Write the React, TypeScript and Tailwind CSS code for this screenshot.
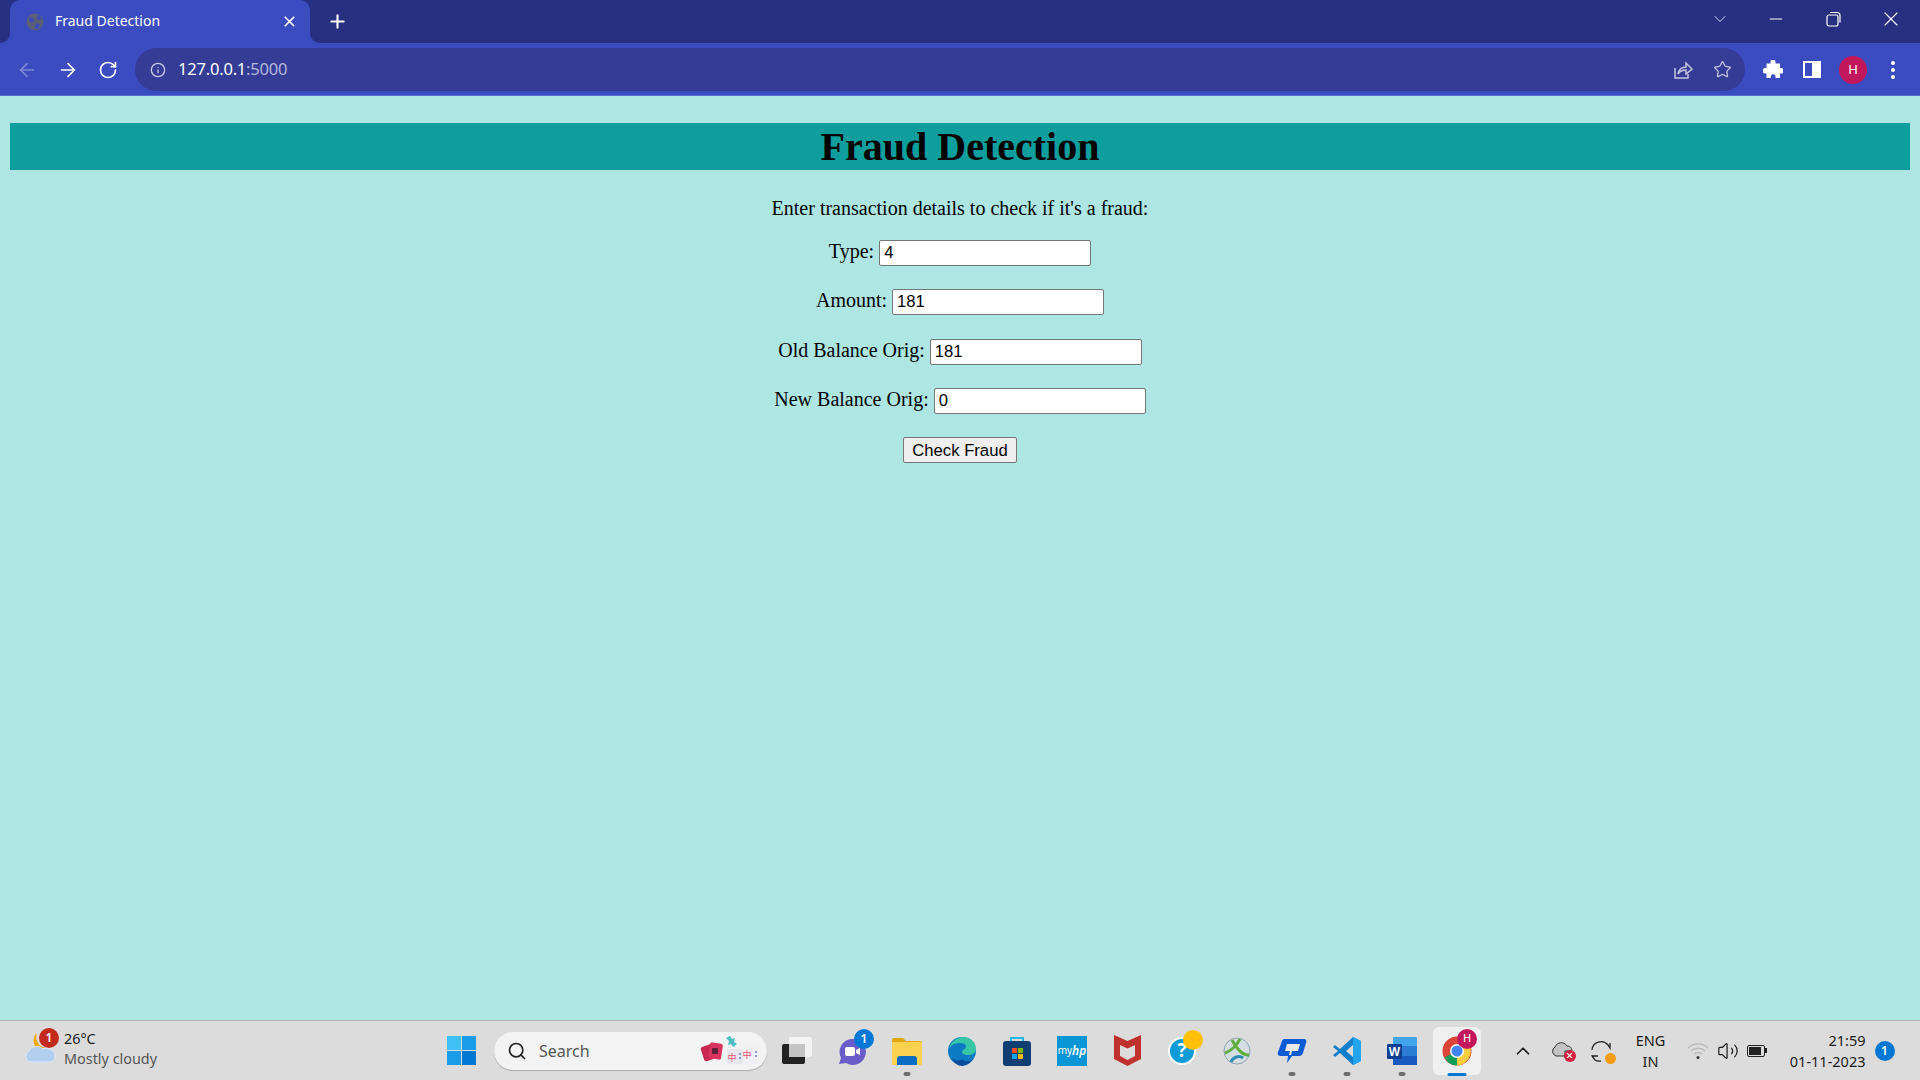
import React from 'react'
import { ArrowLeft, ArrowRight, RotateCw, Info, Star, X, Plus, ChevronDown, ChevronUp, Minus, Search, Volume2 } from 'lucide-react'

const uiFont = "font-['Noto_Sans',sans-serif]"

function Globe() {
  return (
    <svg width="18" height="18" viewBox="0 0 18 18">
      <circle cx="9" cy="9" r="8.5" fill="#5a5f75" />
      <path d="M3 5c2-1 4 0 5 1s0 2-1 3-3 0-4-1zM11 2c2 0 4 2 5 4l-3 1-2-2zM9 11c2-1 4 0 5 1l-2 4c-1 0-2 0-3-1z" fill="#3d4bb8" />
    </svg>
  )
}

function Tab() {
  return (
    <div className="relative flex h-[43px] w-[300px] items-center rounded-t-[10px] bg-[#3b4bc0] pl-[16px] pr-[12px]">
      <div className="absolute bottom-0 left-[-10px] h-[10px] w-[10px] bg-[#3b4bc0]">
        <div className="h-full w-full rounded-br-[10px] bg-[#262f80]" />
      </div>
      <div className="absolute bottom-0 right-[-10px] h-[10px] w-[10px] bg-[#3b4bc0]">
        <div className="h-full w-full rounded-bl-[10px] bg-[#262f80]" />
      </div>
      <Globe />
      <span className={`mb-[2px] ml-[11px] flex-1 text-[14px] text-white ${uiFont}`}>Fraud Detection</span>
      <X size={17} strokeWidth={2.4} className="text-white" />
    </div>
  )
}

function TabStrip() {
  return (
    <div className="flex h-[43px] items-center bg-[#262f80] pl-[10px] text-white">
      <Tab />
      <Plus size={21} strokeWidth={2.4} className="ml-[17px]" />
      <div className="flex-1" />
      <ChevronDown size={20} strokeWidth={1.2} className="mb-[6px] text-[#d5d8ef]" />
      <div className="w-[46px]" />
      <Minus size={20} strokeWidth={1.2} className="mb-[6px] ml-[-10px]" />
      <div className="mb-[6px] ml-[37px] h-[20px] w-[20px]">
        <svg width="20" height="20" viewBox="0 0 20 20" fill="none" stroke="#fff" strokeWidth="1.2">
          <rect x="4" y="6" width="11" height="11" rx="2" />
          <path d="M7 3.500h7a3 3 0 0 1 3 3v7" />
        </svg>
      </div>
      <X size={24} strokeWidth={1.1} className="mb-[6px] ml-[36px] mr-[17px]" />
    </div>
  )
}

function Toolbar() {
  return (
    <div className="flex h-[53px] items-center border-b border-[#5b6ad2] bg-[#3b4bc0] pt-[1px] text-white">
      <div className="flex w-[135px] items-center pl-[16px]">
        <ArrowLeft size={22} strokeWidth={1.8} className="text-[#7c88d6]" />
        <ArrowRight size={22} strokeWidth={1.8} className="ml-[19px]" />
        <RotateCw size={20} strokeWidth={2} className="ml-[19px]" />
      </div>
      <div className="flex h-[43px] flex-1 items-center rounded-full bg-[#343c96] pl-[15px] pr-[13px]">
        <Info size={16} strokeWidth={2} className="text-[#c9cbe4]" />
        <span className={`ml-[12px] flex-1 text-[16.500px] tracking-[-0.2px] ${uiFont}`}>
          127.0.0.1<span className="text-[#b4b8dc]">:5000</span>
        </span>
        <svg width="20" height="20" viewBox="0 0 20 20" fill="none" stroke="#c3c5de" strokeWidth="1.5">
          <path d="M2 8v10h13v-4" />
          <path d="M5 14c1-5 4-7 8-7V3l6 6-6 5v-4c-3 0-6 1-8 4z" />
        </svg>
        <Star size={19} strokeWidth={1.6} className="ml-[20px] text-[#c3c5de]" />
      </div>
      <div className="flex w-[175px] items-center pl-[18px]">
        <svg width="20" height="20" viewBox="0 0 20 20" fill="#fff">
          <path d="M7.500 2a2.500 2.500 0 0 1 5 0v1.500H17V8h1a2.800 2.800 0 0 1 0 5.600h-1V18h-4.500v-1.500a2.300 2.300 0 0 0-4.600 0V18H3.500v-4.500H2.300a2.700 2.700 0 0 1 0-5.400h1.200V3.500h4z" />
        </svg>
        <div className="ml-[20px] flex h-[17px] w-[18px] justify-end border-2 border-white">
          <div className="h-full w-[7px] bg-white" />
        </div>
        <div className={`ml-[18px] flex h-[28px] w-[28px] items-center justify-center rounded-full bg-[#c2185b] text-[13px] text-white ${uiFont}`}>H</div>
        <div className="ml-[24px] flex flex-col gap-[3px]">
          <div className="h-[4px] w-[4px] rounded-full bg-white" />
          <div className="h-[4px] w-[4px] rounded-full bg-white" />
          <div className="h-[4px] w-[4px] rounded-full bg-white" />
        </div>
      </div>
    </div>
  )
}

function Field({ label, value }: { label: string; value: string }) {
  return (
    <div className="mb-[23.300px] flex h-[26px] items-center justify-center gap-[5px]">
      <label className="mt-[-4px] text-[20px]">{label}</label>
      <input
        type="text"
        readOnly
        value={value}
        className="h-[26px] w-[212px] rounded-[2px] border border-[#767676] bg-white px-[4px] font-['Liberation_Sans',sans-serif] text-[16.670px] text-black outline-none"
      />
    </div>
  )
}

function Page() {
  return (
    <div className="flex-1 bg-[#aee6e4] px-[10px] pt-[27px] font-['Liberation_Serif',serif] text-black">
      <h1 className="h-[47px] bg-[#0e9e9e] text-center text-[40px] font-bold leading-[48px]">Fraud Detection</h1>
      <p className="mb-[20px] mt-[27px] text-center text-[20px] leading-[23px]">Enter transaction details to check if it's a fraud:</p>
      <Field label="Type:" value="4" />
      <Field label="Amount:" value="181" />
      <Field label="Old Balance Orig:" value="181" />
      <Field label="New Balance Orig:" value="0" />
      <div className="flex justify-center">
        <button className="h-[26px] w-[114px] rounded-[2px] border border-[#767676] bg-[#efefef] font-['Liberation_Sans',sans-serif] text-[16.670px] text-black">
          Check Fraud
        </button>
      </div>
    </div>
  )
}

function Badge({ n, color, className }: { n: string; color: string; className: string }) {
  return (
    <div className={`absolute flex h-[20px] w-[20px] items-center justify-center rounded-full text-[12px] font-semibold text-white ${color} ${className} ${uiFont}`}>
      {n}
    </div>
  )
}

function Weather() {
  return (
    <div className="flex w-[447px] items-center pl-[24px]">
      <div className="relative h-[40px] w-[40px]">
        <svg width="32" height="32" viewBox="0 0 32 32" className="absolute left-0 top-[1px]">
          <path d="M13 1a10 10 0 0 0 0 15h9A11 11 0 0 1 13 1z" fill="#f2a900" />
          <path d="M6 30a6 6 0 0 1-1-11c2-5 11-6 14-2 5-2 12 1 12 7 0 4-3 6-6 6z" fill="#b3cff0" stroke="#dbe8f8" strokeWidth="1" />
        </svg>
        <Badge n="1" color="bg-[#c42b1c]" className="left-[15px] top-[-3px]" />
      </div>
      <div className={`mb-[3px] text-[14.400px] leading-[20px] ${uiFont}`}>
        <div className="text-[#1a1a1a]">26°C</div>
        <div className="text-[#555]">Mostly cloudy</div>
      </div>
    </div>
  )
}

function StartIcon() {
  return (
    <div className="grid h-[29px] w-[29px] grid-cols-2 gap-[1.500px]">
      <div className="bg-[#3fc1f7]" />
      <div className="bg-[#1a9de8]" />
      <div className="bg-[#1a9de8]" />
      <div className="bg-[#0078d4]" />
    </div>
  )
}

function SearchBox() {
  return (
    <div className="ml-[18px] mr-[2.500px] flex h-[38px] w-[273px] items-center rounded-full bg-[#f3f3f3] pl-[13px] shadow-[0_1px_1px_#aaa]">
      <Search size={20} strokeWidth={2} className="text-[#222]" />
      <span className={`ml-[12px] flex-1 text-[16px] text-[#555] ${uiFont}`}>Search</span>
      <svg width="60" height="30" viewBox="0 0 60 30" className="mr-[7px]">
        <rect x="2" y="9" width="13" height="15" rx="2" fill="#c8284f" transform="rotate(-18 9 16)" />
        <rect x="9" y="7" width="13" height="16" rx="2" fill="#d8335f" transform="rotate(8 15 15)" />
        <rect x="12" y="12" width="6" height="6" rx="1" fill="#5e2036" />
        <path d="M26 2l4-2 2 3 3-1-1 4 3 2-4 3-2-3-3 1 1-4z" fill="#4fbfc4" />
        <rect x="27" y="13" width="16" height="15" rx="2" fill="#e6e6ef" />
        <rect x="43" y="11" width="16" height="17" rx="2" fill="#efeff5" />
        <text x="32" y="25" textAnchor="middle" fontSize="9" fill="#f0506e" fontFamily="Noto Sans CJK SC">中</text>
        <text x="47" y="22" textAnchor="middle" fontSize="9" fill="#f0506e" fontFamily="Noto Sans CJK SC">中</text>
        <circle cx="40" cy="18" r="1" fill="#6a82c8" />
        <circle cx="40" cy="22" r="1" fill="#6a82c8" />
        <circle cx="56" cy="16" r="1" fill="#6a82c8" />
        <circle cx="56" cy="20" r="1" fill="#6a82c8" />
      </svg>
    </div>
  )
}

function Cell({ children, dot, active }: { children: React.ReactNode; dot?: boolean; active?: boolean }) {
  return (
    <div className={`relative flex h-[48px] w-[55px] items-center justify-center ${active ? 'before:absolute before:inset-y-0 before:left-[3.500px] before:right-[3.500px] before:rounded-md before:bg-[#f0f0f0]' : ''}`}>
      <div className="relative">{children}</div>
      {dot && <div className="absolute bottom-[-1px] left-1/2 h-[4px] w-[7px] -translate-x-1/2 rounded-full bg-[#6e6e6e]" />}
      {active && <div className="absolute bottom-[-1px] left-1/2 h-[3px] w-[19px] -translate-x-1/2 rounded-full bg-[#0078d4]" />}
    </div>
  )
}

function AppIcons() {
  return (
    <div className="flex items-center">
      <Cell>
        <svg width="30" height="27" viewBox="0 0 30 27">
          <rect x="7" y="0" width="23" height="20" rx="2" fill="#f4f4f4" />
          <rect x="0" y="7" width="23" height="20" rx="2" fill="#222" />
          <rect x="7" y="7" width="16" height="13" fill="#c4c4c4" />
        </svg>
      </Cell>
      <Cell>
        <svg width="28" height="28" viewBox="0 0 28 28">
          <path d="M14 2a13 13 0 1 1-6 24l-7 1 2-6A13 13 0 0 1 14 2z" fill="#6a5cc9" />
          <rect x="7" y="10" width="10" height="9" rx="2" fill="#fff" />
          <path d="M18 13l4-2v7l-4-2z" fill="#fff" />
        </svg>
        <Badge n="1" color="bg-[#0078d4]" className="left-[16px] top-[-8px]" />
      </Cell>
      <Cell dot>
        <svg width="30" height="28" viewBox="0 0 30 28">
          <path d="M0 3a2 2 0 0 1 2-2h9l3 3h14a2 2 0 0 1 2 2v3H0z" fill="#e3a70f" />
          <rect x="0" y="5" width="30" height="23" rx="1" fill="#fbd24f" />
          <path d="M5 28v-6a3 3 0 0 1 3-3h14a3 3 0 0 1 3 3v6z" fill="#0a6cc2" />
        </svg>
      </Cell>
      <Cell>
        <svg width="30" height="30" viewBox="0 0 30 30">
          <circle cx="15" cy="15" r="14" fill="#0c7ac4" />
          <path d="M2 13C4 4 12 1 17 1c7 0 12 6 12 12 0 4-4 6-8 6-3 0-6-1-6-3 0-3 4-2 4-6 0-2-3-3-6-3C8 7 4 9 2 13z" fill="#37c6a5" />
          <path d="M5 22c3 3 8 3 10 1 3 3 8 3 11 0-3 5-8 7-11 7-4 0-8-3-10-8z" fill="#0a4f9e" />
        </svg>
      </Cell>
      <Cell>
        <svg width="28" height="30" viewBox="0 0 28 30">
          <path d="M8 6V2h12v4" fill="none" stroke="#27b6e6" strokeWidth="2" />
          <rect x="0" y="5" width="28" height="25" rx="3" fill="#123f73" />
          <rect x="9" y="12" width="5" height="5" fill="#f25022" />
          <rect x="15" y="12" width="5" height="5" fill="#7fba00" />
          <rect x="9" y="18" width="5" height="5" fill="#00a4ef" />
          <rect x="15" y="18" width="5" height="5" fill="#ffb900" />
        </svg>
      </Cell>
      <Cell>
        <div className={`flex h-[30px] w-[30px] items-center justify-center bg-[#0a96d6] text-[10px] text-white ${uiFont}`}>
          my<span className="text-[12px] font-semibold italic">hp</span>
        </div>
      </Cell>
      <Cell>
        <svg width="27" height="31" viewBox="0 0 27 31">
          <path d="M0 0l13.500 6L27 0v24l-13.500 7L0 24z" fill="#c0302c" />
          <path d="M6 10l7.500 3.500L21 10v11l-7.500 4L6 21z" fill="#dcdcdc" />
        </svg>
      </Cell>
      <Cell>
        <div className={`flex h-[28px] w-[28px] items-center justify-center rounded-full border-2 border-white bg-[#0e9bd8] text-[19px] font-bold text-white ${uiFont}`}>?</div>
        <div className="absolute left-[15px] top-[-7px] h-[20px] w-[20px] rounded-full bg-[#ffc107]" />
      </Cell>
      <Cell>
        <svg width="28" height="28" viewBox="0 0 28 28" fill="none">
          <circle cx="14" cy="14" r="13" fill="#d3dde2" stroke="#8fa5b3" strokeWidth="1" />
          <path d="M2 16c6-2 12-8 15-14M9 3c3 6 10 16 17 15" stroke="#5fae3c" strokeWidth="3" />
          <path d="M8 25c2-5 8-7 12-4" stroke="#2f8bb8" strokeWidth="3" />
        </svg>
      </Cell>
      <Cell dot>
        <svg width="30" height="28" viewBox="0 0 30 28">
          <path d="M7 2h20c2 0 3 2 2 4l-3 10c-1 2-2 3-4 3h-7l-5 7 1-7H4c-2 0-4-1-3-4L5 4c0-1 1-2 2-2z" fill="#0d5cd6" />
          <path d="M10 7h13l-2 7h-6l-1 4h-2l1-4H8z" fill="#e8e8e8" />
        </svg>
      </Cell>
      <Cell dot>
        <svg width="30" height="30" viewBox="0 0 30 30">
          <path d="M21 1l8 4v20l-8 4L8 17l-5 4-2-2 5-4-5-4 2-2 5 4z" fill="#0e7fcb" />
          <path d="M21 1l8 4v20l-8 4z" fill="#25a4ee" />
          <path d="M21 9l-7 6 7 6z" fill="#dcdcdc" />
        </svg>
      </Cell>
      <Cell dot>
        <svg width="30" height="30" viewBox="0 0 30 30">
          <rect x="6" y="1" width="24" height="28" rx="1" fill="#41a5ee" />
          <rect x="6" y="10" width="24" height="10" fill="#2b7cd3" />
          <rect x="6" y="20" width="24" height="9" fill="#185abd" />
          <rect x="0" y="8" width="15" height="15" rx="1" fill="#103f91" />
          <text x="7.500" y="20" textAnchor="middle" fontSize="12" fontWeight="700" fill="#fff" fontFamily="Liberation Sans">W</text>
        </svg>
      </Cell>
      <Cell active>
        <svg width="30" height="30" viewBox="0 0 30 30">
          <circle cx="15" cy="15" r="14.500" fill="#dc4437" />
          <path d="M15 15L2.500 21.500A14.500 14.500 0 0 0 15 29.500z" fill="#0f9d58" />
          <path d="M15 15l12.500-6A14.500 14.500 0 0 1 15 29.500z" fill="#ffcd40" />
          <circle cx="15" cy="15" r="7" fill="#fff" />
          <circle cx="15" cy="15" r="5.500" fill="#4285f4" />
        </svg>
        <div className={`absolute left-[15px] top-[-7px] flex h-[20px] w-[20px] items-center justify-center rounded-full bg-[#c2185b] text-[11px] text-white ${uiFont}`}>H</div>
      </Cell>
    </div>
  )
}

function Tray() {
  return (
    <div className={`flex flex-1 items-center pl-[27px] text-[#1a1a1a] ${uiFont}`}>
      <ChevronUp size={22} strokeWidth={1.8} />
      <div className="relative ml-[17px] h-[20px] w-[24px]">
        <svg width="22" height="16" viewBox="0 0 22 16" className="absolute left-0 top-0">
          <path d="M5 15a5 5 0 0 1-1-9c2-5 9-6 12-1 4 0 5 3 5 5H14v5z" fill="#c4c4c4" stroke="#333" strokeWidth="1" />
        </svg>
        <div className="absolute bottom-[-1px] right-[-1px] flex h-[12px] w-[12px] items-center justify-center rounded-full bg-[#d6203b]">
          <X size={9} strokeWidth={3} className="text-white" />
        </div>
      </div>
      <div className="relative ml-[15px] h-[24px] w-[24px]">
        <svg width="24" height="24" viewBox="0 0 24 24" fill="none" stroke="#222" strokeWidth="1.300">
          <path d="M2 11a9 9 0 0 1 16-5l2 3V4" />
          <path d="M2 17h6M2 17l3 4a8 8 0 0 0 6 1M2 17v-1" />
        </svg>
        <div className="absolute bottom-[-1px] right-[-2px] h-[11px] w-[11px] rounded-full bg-[#f39c12]" />
      </div>
      <div className="ml-[17px] w-[40px] text-center text-[14.500px] leading-[21px]">
        <div>ENG</div>
        <div>IN</div>
      </div>
      <svg width="22" height="18" viewBox="0 0 22 18" fill="none" stroke="#b8b8b8" strokeWidth="1.300" className="ml-[16px]">
        <path d="M1 6a14 14 0 0 1 20 0M4 9a10 10 0 0 1 14 0M7 12a6 6 0 0 1 8 0" />
        <circle cx="11" cy="15.500" r="1.500" fill="#333" stroke="none" />
      </svg>
      <Volume2 size={22} strokeWidth={1.300} className="ml-[8px]" />
      <div className="ml-[8px] flex items-center">
        <div className="flex h-[12px] w-[18px] items-center rounded-[2px] border border-[#222] p-[1px]">
          <div className="h-full w-[12px] bg-[#222]" />
        </div>
        <div className="h-[5px] w-[2px] bg-[#222]" />
      </div>
      <div className="ml-[10px] w-[89px] text-right text-[14.500px] leading-[21px]">
        <div>21:59</div>
        <div>01-11-2023</div>
      </div>
      <div className="relative ml-[9px] h-[20px] w-[20px]">
        <Badge n="1" color="bg-[#0078d4]" className="left-0 top-0" />
      </div>
    </div>
  )
}

function Taskbar() {
  return (
    <div className="flex h-[60px] items-center border-t border-[#b5b5b5] bg-[#dcdcdc]">
      <Weather />
      <StartIcon />
      <SearchBox />
      <AppIcons />
      <Tray />
    </div>
  )
}

export default function App() {
  return (
    <div className="flex h-[1080px] w-[1920px] flex-col overflow-hidden">
      <TabStrip />
      <Toolbar />
      <Page />
      <Taskbar />
    </div>
  )
}
